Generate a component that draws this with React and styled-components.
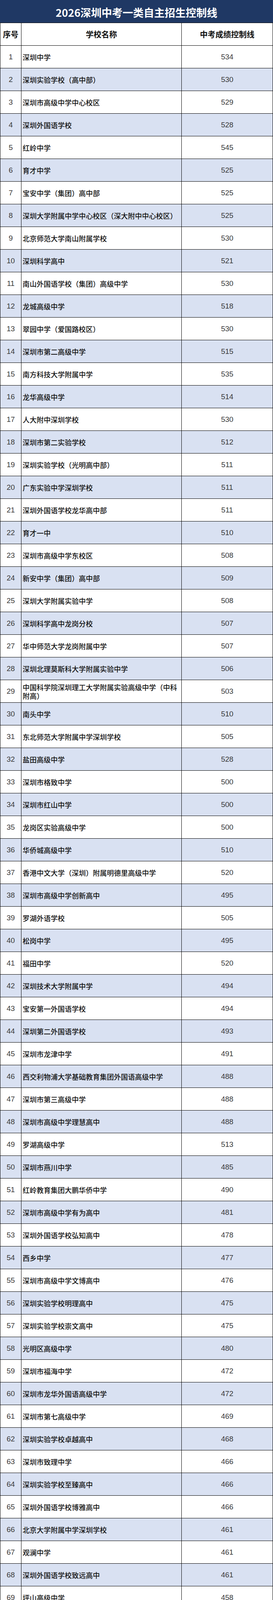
import React from "react";
import styled, { createGlobalStyle } from "styled-components";

const GlobalStyle = createGlobalStyle`
  body {
    margin: 0;
    background: #ffffff;
    font-family: "Noto Sans CJK SC", "Liberation Sans", sans-serif;
  }
`;

const schools = [
  ["深圳中学", 534],
  ["深圳实验学校（高中部）", 530],
  ["深圳市高级中学中心校区", 529],
  ["深圳外国语学校", 528],
  ["红岭中学", 545],
  ["育才中学", 525],
  ["宝安中学（集团）高中部", 525],
  ["深圳大学附属中学中心校区（深大附中中心校区）", 525],
  ["北京师范大学南山附属学校", 530],
  ["深圳科学高中", 521],
  ["南山外国语学校（集团）高级中学", 530],
  ["龙城高级中学", 518],
  ["翠园中学（爱国路校区）", 530],
  ["深圳市第二高级中学", 515],
  ["南方科技大学附属中学", 535],
  ["龙华高级中学", 514],
  ["人大附中深圳学校", 530],
  ["深圳市第二实验学校", 512],
  ["深圳实验学校（光明高中部）", 511],
  ["广东实验中学深圳学校", 511],
  ["深圳外国语学校龙华高中部", 511],
  ["育才一中", 510],
  ["深圳市高级中学东校区", 508],
  ["新安中学（集团）高中部", 509],
  ["深圳大学附属实验中学", 508],
  ["深圳科学高中龙岗分校", 507],
  ["华中师范大学龙岗附属中学", 507],
  ["深圳北理莫斯科大学附属实验中学", 506],
  ["中国科学院深圳理工大学附属实验高级中学（中科附高）", 503],
  ["南头中学", 510],
  ["东北师范大学附属中学深圳学校", 505],
  ["盐田高级中学", 528],
  ["深圳市格致中学", 500],
  ["深圳市红山中学", 500],
  ["龙岗区实验高级中学", 500],
  ["华侨城高级中学", 510],
  ["香港中文大学（深圳）附属明德里高级中学", 520],
  ["深圳市高级中学创新高中", 495],
  ["罗湖外语学校", 505],
  ["松岗中学", 495],
  ["福田中学", 520],
  ["深圳技术大学附属中学", 494],
  ["宝安第一外国语学校", 494],
  ["深圳第二外国语学校", 493],
  ["深圳市龙津中学", 491],
  ["西交利物浦大学基础教育集团外国语高级中学", 488],
  ["深圳市第三高级中学", 488],
  ["深圳市高级中学理慧高中", 488],
  ["罗湖高级中学", 513],
  ["深圳市燕川中学", 485],
  ["红岭教育集团大鹏华侨中学", 490],
  ["深圳市高级中学有为高中", 481],
  ["深圳外国语学校弘知高中", 478],
  ["西乡中学", 477],
  ["深圳市高级中学文博高中", 476],
  ["深圳实验学校明理高中", 475],
  ["深圳实验学校崇文高中", 475],
  ["光明区高级中学", 480],
  ["深圳市福海中学", 472],
  ["深圳市龙华外国语高级中学", 472],
  ["深圳市第七高级中学", 469],
  ["深圳实验学校卓越高中", 468],
  ["深圳市致理中学", 466],
  ["深圳实验学校至臻高中", 466],
  ["深圳外国语学校博雅高中", 466],
  ["北京大学附属中学深圳学校", 461],
  ["观澜中学", 461],
  ["深圳外国语学校致远高中", 461],
  ["坪山高级中学", 458],
  ["深圳市龙华科技实验高级中学", 470],
  ["深圳外国语学校理工高中", 455],
  ["深圳市聚龙科学中学", 466],
  ["石岩外国语学校", 449],
  ["光明中学", 447],
  ["深圳市第二实验学校明远高中", 441],
  ["深圳市龙岗区第二高级中学", 441],
  ["深圳中学科技高中", 437],
  ["深圳中学数理高中", 436],
  ["深圳中学实验高中", 436],
  ["深圳市第二高级中学深汕实验学校", 435],
  ["深圳启元中学", 427],
  ["深圳益新中学", 427],
  ["深圳大学附属中学盐田校区（深大附中盐田校区）", 459],
  ["深圳市第二高级中学宝安高中部", 486],
  ["深圳理工大学附属中学", 427],
  ["翠园中学（东门北路校区）", 530],
  ["深圳市曙光中学（综合高中）", 427],
  ["深圳创新高级中学（综合高中）", 430],
];

const Page = styled.div`
  width: 700px;
  overflow: hidden;
`;

const TitleBar = styled.div`
  height: 58px;
  box-sizing: border-box;
  padding-top: 4px;
  background: #1f3864;
  color: #ffffff;
  display: flex;
  align-items: center;
  justify-content: center;
  font-family: "Noto Sans CJK SC", sans-serif;
  font-size: 27px;
  font-weight: 700;
`;

const Table = styled.div`
  border-top: 1px solid #000;
  border-left: 1px solid #000;
  border-right: 1px solid #000;
`;

const Row = styled.div`
  display: grid;
  grid-template-columns: 54px 411px 1fr;
  height: 58px;
  box-sizing: border-box;
  overflow: hidden;
  border-bottom: 1px solid #000;
  background: ${(p) => (p.$striped ? "#d9e1f2" : "#ffffff")};
`;

const Cell = styled.div`
  display: flex;
  align-items: center;
  min-width: 0;
  box-sizing: border-box;
  border-right: 1px solid #000;
  &:last-child {
    border-right: none;
  }
`;

const HeaderCell = styled(Cell)`
  justify-content: center;
  font-family: "Noto Sans CJK SC", sans-serif;
  font-size: 20px;
  font-weight: 700;
  color: #111;
`;

const NumCell = styled(Cell)`
  justify-content: center;
  font-family: "Liberation Sans Narrow", "Liberation Sans", sans-serif;
  font-size: 19px;
  color: #3a3a3a;
`;

const NameCell = styled(Cell)`
  padding: 0 4px 0 3px;
  font-family: "Noto Sans CJK SC", sans-serif;
  font-size: 18px;
  font-weight: 500;
  line-height: 22px;
  color: #111;
`;

export default function App() {
  return (
    <Page>
      <GlobalStyle />
      <TitleBar>2026深圳中考一类自主招生控制线</TitleBar>
      <Table>
        <Row>
          <HeaderCell>序号</HeaderCell>
          <HeaderCell>学校名称</HeaderCell>
          <HeaderCell>中考成绩控制线</HeaderCell>
        </Row>
        {schools.map(([name, score], i) => (
          <Row key={i} $striped={i % 2 === 1}>
            <NumCell>{i + 1}</NumCell>
            <NameCell>{name}</NameCell>
            <NumCell>{score}</NumCell>
          </Row>
        ))}
      </Table>
    </Page>
  );
}
